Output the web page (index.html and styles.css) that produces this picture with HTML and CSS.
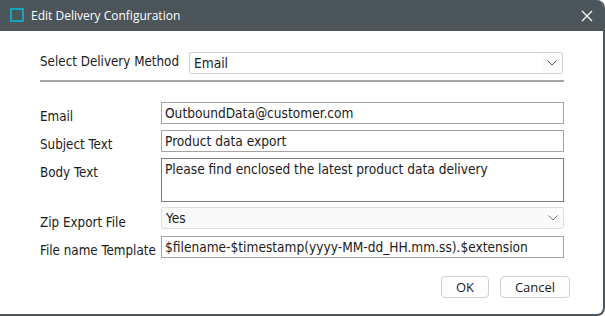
FILE: index.html
```html
<!DOCTYPE html>
<html lang="en">
<head>
    <meta charset="UTF-8">
    <title>Edit Delivery Configuration</title>
    <link rel="stylesheet" href="styles.css">
</head>
<body>
    <div class="window">
        <div class="titlebar">
            <span class="app-icon"></span>
            <span class="title">Edit Delivery Configuration</span>
            <button class="close-btn" aria-label="Close">
                <svg width="12" height="12" viewBox="0 0 12 12"><path d="M1 1 L11 11 M11 1 L1 11" stroke="#ffffff" stroke-width="1.2" fill="none"/></svg>
            </button>
        </div>

        <div class="content">
            <div class="method-row">
                <label class="label">Select Delivery Method</label>
                <div class="combo">
                    <span class="combo-value">Email</span>
                    <span class="combo-arrow"><svg width="10" height="6" viewBox="0 0 10 6"><path d="M0.5 0.5 L5 5 L9.5 0.5" stroke="#555" stroke-width="1" fill="none"/></svg></span>
                </div>
            </div>
            <div class="separator"></div>

            <div class="form">
                <label class="label">Email</label>
                <div class="field">OutboundData@customer.com</div>

                <label class="label">Subject Text</label>
                <div class="field">Product data export</div>

                <label class="label">Body Text</label>
                <div class="field field-multi">Please find enclosed the latest product data delivery</div>

                <label class="label">Zip Export File</label>
                <div class="combo combo-grey">
                    <span class="combo-value">Yes</span>
                    <span class="combo-arrow"><svg width="10" height="6" viewBox="0 0 10 6"><path d="M0.5 0.5 L5 5 L9.5 0.5" stroke="#777" stroke-width="1" fill="none"/></svg></span>
                </div>

                <label class="label">File name Template</label>
                <div class="field">$filename-$timestamp(yyyy-MM-dd_HH.mm.ss).$extension</div>
            </div>

            <div class="actions">
                <button class="btn btn-ok">OK</button>
                <button class="btn btn-cancel">Cancel</button>
            </div>
        </div>
    </div>
</body>
</html>
```

FILE: styles.css
```css
body {
    margin: 0;
    background: #ffffff;
    font-family: "Open Sans", "Noto Sans", sans-serif;
}

.window {
    width: 605px;
    height: 316px;
    box-sizing: border-box;
    background: #ffffff;
    border-right: 2px solid #4d565b;
    border-bottom: 2px solid #4d565b;
    border-radius: 0 8px 8px 0;
    overflow: hidden;
    display: flex;
    flex-direction: column;
}

.titlebar {
    height: 31px;
    background: #4c555a;
    display: flex;
    align-items: center;
    padding-left: 10px;
    color: #ffffff;
    flex-shrink: 0;
}

.app-icon {
    width: 10px;
    height: 10px;
    border: 2px solid #14a6bd;
    margin-top: -1px;
}

.title {
    margin-left: 7px;
    font-size: 12px;
    margin-top: -1px;
}

.close-btn {
    margin-left: auto;
    margin-right: 9px;
    background: none;
    border: none;
    padding: 0;
    width: 14px;
    height: 14px;
    display: flex;
    align-items: center;
    justify-content: center;
}

.content {
    padding: 21px 39px 0 40px;
    color: #1b1b1b;
}

.method-row {
    display: grid;
    grid-template-columns: 149px 374px;
    align-items: center;
}

.separator {
    height: 2px;
    background: #a3a3a3;
    margin-top: 6px;
    width: 524px;
}

.form {
    display: grid;
    grid-template-columns: 121px 403px;
    row-gap: 6px;
    margin-top: 20px;
}

.label {
    display: block;
    padding-top: 7px;
    line-height: 15px;
    white-space: nowrap;
    font-family: "DejaVu Sans Condensed", "DejaVu Sans", sans-serif;
    font-size: 13.3px;
}

.method-row .label {
    padding-top: 0;
    margin-top: -3px;
}

.field {
    height: 22px;
    box-sizing: border-box;
    border: 1px solid #a4a4a4;
    padding: 1px 3px;
    font-family: "DejaVu Sans Condensed", "DejaVu Sans", sans-serif;
    font-size: 13.6px;
    line-height: 18px;
    white-space: nowrap;
    overflow: hidden;
}

.field-multi {
    height: 44px;
    border-color: #7c7c7c;
}

.combo {
    height: 22px;
    box-sizing: border-box;
    border: 1px solid #cfcfcf;
    border-radius: 2px;
    background: #ffffff;
    display: flex;
    align-items: center;
    padding-left: 4px;
    font-family: "DejaVu Sans Condensed", "DejaVu Sans", sans-serif;
    font-size: 13.6px;
}

.combo-grey {
    background: #f9f9f9;
    border-color: #dedede;
    margin-top: -1px;
}

.combo-value {
    flex: 1;
    margin-top: -1px;
}

.combo-arrow {
    width: 20px;
    height: 20px;
    display: flex;
    align-items: center;
    justify-content: center;
    background: #fbfbfb;
}

.actions {
    display: flex;
    justify-content: flex-end;
    gap: 11px;
    margin-top: 18px;
    margin-right: -6px;
}

.btn {
    height: 22px;
    box-sizing: border-box;
    border: 1px solid #d0d0d0;
    border-radius: 4px;
    background: #fdfdfd;
    font-family: "Open Sans", sans-serif;
    font-size: 13px;
    color: #1b1b1b;
    padding: 0;
}

.btn-ok {
    width: 48px;
}

.btn-cancel {
    width: 70px;
}
```
